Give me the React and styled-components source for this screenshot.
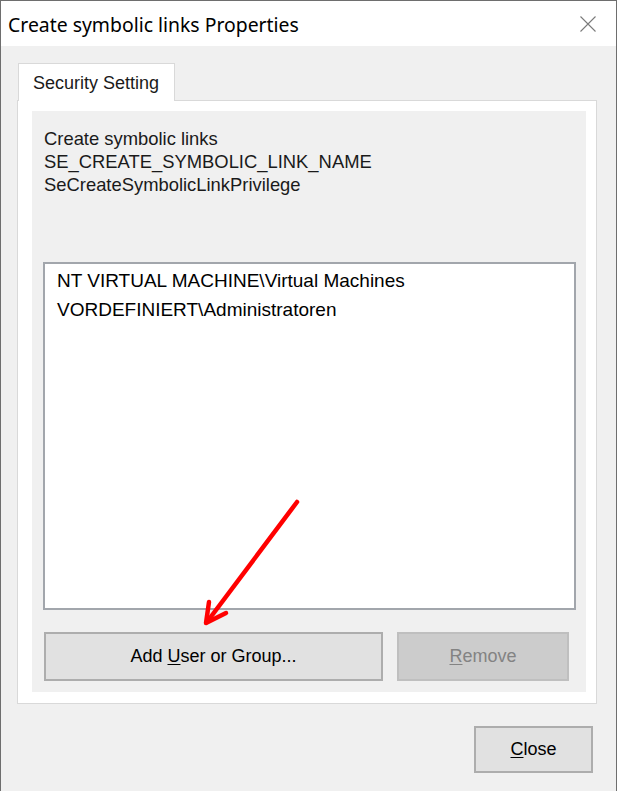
import React from 'react'
import styled, { createGlobalStyle } from 'styled-components'

const GlobalStyle = createGlobalStyle`
  html, body {
    margin: 0;
    padding: 0;
    background: #f0f0f0;
  }
  body {
    font-family: "Liberation Sans", Arial, sans-serif;
    color: #000;
  }
  * { box-sizing: border-box; }
`

const Window = styled.div`
  position: relative;
  width: 617px;
  height: 791px;
  background: #f0f0f0;
  border: 1px solid #6e6e6e;
  border-bottom: none;
  overflow: hidden;
`

const TitleBar = styled.div`
  height: 45px;
  background: #fff;
  display: flex;
  align-items: center;
  justify-content: space-between;
  padding: 0 20px 0 7px;
`

const Title = styled.div`
  font-family: "Segoe UI", "Noto Sans", "Open Sans", sans-serif;
  font-size: 19.4px;
  color: #000;
  padding-top: 1px;
`

const Body = styled.div`
  padding: 17px 0 0 16px;
`

const TabStrip = styled.div`
  display: flex;
  padding-left: 1px;
`

const Tab = styled.div`
  position: relative;
  z-index: 1;
  width: 157px;
  height: 38px;
  margin-bottom: -1px;
  background: #fff;
  border: 1px solid #d9d9d9;
  border-bottom: none;
  padding: 9px 0 0 14px;
  font-size: 18px;
  color: #1a1a1a;
`

const TabPanel = styled.div`
  width: 580px;
  height: 604px;
  background: #fff;
  border: 1px solid #d9d9d9;
  padding: 10px 10px 11px 14px;
`

const Inner = styled.div`
  height: 581px;
  background: #f0f0f0;
  padding: 16px 10px 11px 11px;
  display: flex;
  flex-direction: column;
`

const Info = styled.div`
  font-size: 18.4px;
  line-height: 23px;
  padding-left: 1px;
  color: #1a1a1a;
`

const ListBox = styled.div`
  margin-top: 66px;
  height: 348px;
  background: #fff;
  border: 2px solid #a2a6ac;
  padding: 2px 0 0 12px;
`

const ListItem = styled.div`
  font-size: 19px;
  line-height: 29px;
  color: #000;
  white-space: nowrap;
`

const ButtonRow = styled.div`
  display: flex;
  gap: 14px;
  margin-top: 22px;
  padding-left: 1px;
`

const Button = styled.button`
  width: ${p => p.$w}px;
  height: ${p => p.$h || 49}px;
  font-family: "Liberation Sans", Arial, sans-serif;
  font-size: 18px;
  padding: 0;
  background: ${p => (p.disabled ? '#cccccc' : '#e1e1e1')};
  border: 2px solid ${p => (p.disabled ? '#bfbfbf' : '#adadad')};
  color: ${p => (p.disabled ? '#838383' : '#000')};
  cursor: default;
  u { text-underline-offset: 2px; }
`

const Footer = styled.div`
  display: flex;
  justify-content: flex-end;
  padding: 22px 23px 0 0;
`

const Overlay = styled.svg`
  position: absolute;
  left: 0;
  top: 0;
  pointer-events: none;
`

function CloseGlyph() {
  return (
    <svg width="16" height="16" viewBox="0 0 16 16">
      <path d="M0.5 0.5 L15.5 15.5 M15.5 0.5 L0.5 15.5" stroke="#7a7a7a" strokeWidth="1.1" fill="none" />
    </svg>
  )
}

export default function App() {
  return (
    <>
      <GlobalStyle />
      <Window>
        <TitleBar>
          <Title>Create symbolic links Properties</Title>
          <CloseGlyph />
        </TitleBar>
        <Body>
          <TabStrip>
            <Tab>Security Setting</Tab>
          </TabStrip>
          <TabPanel>
            <Inner>
              <Info>
                <div>Create symbolic links</div>
                <div>SE_CREATE_SYMBOLIC_LINK_NAME</div>
                <div>SeCreateSymbolicLinkPrivilege</div>
              </Info>
              <ListBox>
                <ListItem>NT VIRTUAL MACHINE\Virtual Machines</ListItem>
                <ListItem>VORDEFINIERT\Administratoren</ListItem>
              </ListBox>
              <ButtonRow>
                <Button $w={339}>Add <u>U</u>ser or Group...</Button>
                <Button $w={172} disabled><u>R</u>emove</Button>
              </ButtonRow>
            </Inner>
          </TabPanel>
        </Body>
        <Footer>
          <Button $w={119} $h={47}><u>C</u>lose</Button>
        </Footer>
        <Overlay width="617" height="791" viewBox="0 0 617 791">
          <g stroke="#ff0000" strokeWidth="4.5" strokeLinecap="round" strokeLinejoin="round" fill="none">
            <path d="M296 501 L206 621" />
            <path d="M208 601 L205 622 L225 612" />
          </g>
        </Overlay>
      </Window>
    </>
  )
}
